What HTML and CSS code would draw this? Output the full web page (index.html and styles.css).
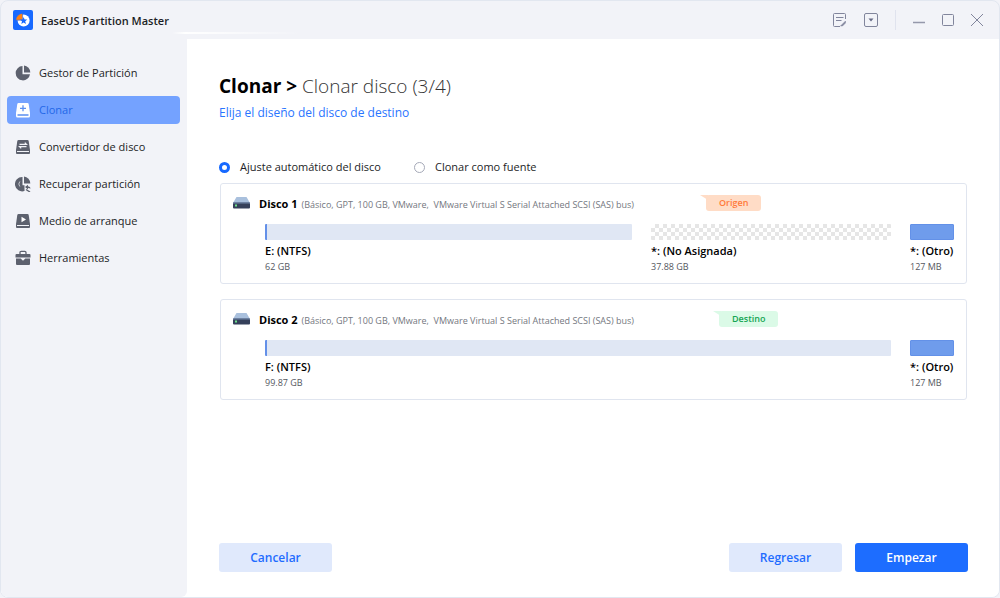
FILE: index.html
```html
<!DOCTYPE html>
<html lang="es">
<head>
    <meta charset="UTF-8">
    <meta name="viewport" content="width=device-width, initial-scale=1.0">
    <title>EaseUS Partition Master</title>
    <link rel="stylesheet" href="styles.css">
</head>
<body>
    <div class="window">
        <header class="titlebar">
            <svg class="logo" viewBox="0 0 20 20" aria-hidden="true">
                <rect width="20" height="20" rx="2" fill="#1769ff"/>
                <circle cx="10.6" cy="10.6" r="6" fill="#fff"/>
                <path d="M9.6 10.2V3.4A6.8 6.8 0 0 0 2.8 10.2z" fill="#ff8010" stroke="#1769ff" stroke-width=".6"/>
                <path d="M10.6 7l1 2.500 2.700.1-2.100 1.700.8 2.700-2.400-1.500L8.300 14l.7-2.700-2-1.700 2.700-.1z" fill="#1769ff"/>
            </svg>
            <span class="app-name">EaseUS Partition Master</span>
            <div class="window-tools">
                <button class="tool" aria-label="Notas">
                    <svg width="14" height="14" viewBox="0 0 14 14" fill="none" stroke="#81859c">
                        <path d="M12.500 6V1.500a1 1 0 0 0-1-1h-10a1 1 0 0 0-1 1v11a1 1 0 0 0 1 1H7M3 4.500h7.500M3 7.500h5.500"/>
                        <path d="M7.500 13l5-5v2l-3 3z" fill="#81859c" stroke-width=".5"/>
                    </svg>
                </button>
                <button class="tool" aria-label="Menú">
                    <svg width="14" height="14" viewBox="0 0 14 14">
                        <rect x=".5" y=".5" width="13" height="13" rx="1.500" fill="none" stroke="#81859c"/>
                        <path d="M4.500 5.500h5L7 8.500z" fill="#666b85"/>
                    </svg>
                </button>
                <span class="divider"></span>
                <button class="tool" aria-label="Minimizar">
                    <svg width="12" height="14" viewBox="0 0 12 14"><path d="M0 9.500h12" stroke="#9598ab" stroke-width="1.300"/></svg>
                </button>
                <button class="tool" aria-label="Maximizar">
                    <svg width="12" height="14" viewBox="0 0 12 14"><rect x=".5" y="1.500" width="11" height="11" rx="1" fill="none" stroke="#81859c"/></svg>
                </button>
                <button class="tool" aria-label="Cerrar">
                    <svg width="12" height="14" viewBox="0 0 12 14"><path d="M0 1l12 12M12 1L0 13" stroke="#81859c"/></svg>
                </button>
            </div>
        </header>

        <div class="content">
            <nav class="sidebar">
                <a href="#" class="nav-item">
                    <svg viewBox="0 0 16 16" fill="#5d616e">
                        <path d="M7.500 1A7.200 7.200 0 1 0 15 9.200H7.500z"/>
                        <path d="M9 .6V7.500h6.300A7 7 0 0 0 9 .6z"/>
                    </svg>
                    Gestor de Partición
                </a>
                <a href="#" class="nav-item active">
                    <svg viewBox="0 0 16 16">
                        <path d="M3.500 1h9q1 0 1.200 1L15 11v3q0 1.500-1.500 1.500h-11Q1 15.500 1 14v-3L2.300 2q.2-1 1.200-1z" fill="#fff"/>
                        <path d="M8 3.300v6M5 6.300h6M2.500 13h11" stroke="#5b8ff0" stroke-width="1.300"/>
                    </svg>
                    Clonar
                </a>
                <a href="#" class="nav-item">
                    <svg viewBox="0 0 16 16">
                        <path d="M3.500 1h9q1 0 1.200 1L15 11v3q0 1-1 1H2q-1 0-1-1v-3L2.300 2q.2-1 1.200-1z" fill="#5d616e"/>
                        <path d="M2 12.500h12M4.500 5.300h7L9.800 3.600M11.500 7.700h-7l1.700 1.700" fill="none" stroke="#f2f3f8" stroke-width="1.200"/>
                    </svg>
                    Convertidor de disco
                </a>
                <a href="#" class="nav-item">
                    <svg viewBox="0 0 16 16" fill="#5d616e">
                        <path d="M7.500 1A7.200 7.200 0 1 0 9.500 15V9.200h-2z"/>
                        <path d="M9 .6V7.500h6.300A7 7 0 0 0 9 .6z"/>
                        <path d="M10 11l3-2.300v1.500q2.600.2 2.600 2.300l-2.600-.5v1.500z"/>
                        <path d="M11 13.500l4 2.500" stroke="#5d616e" stroke-width="1.400"/>
                        <path d="M4.800 5.500a4 4 0 0 0 0 5" fill="none" stroke="#f2f3f8" stroke-width=".7"/>
                    </svg>
                    Recuperar partición
                </a>
                <a href="#" class="nav-item">
                    <svg viewBox="0 0 16 16">
                        <path d="M3.500 1h9q1 0 1.200 1L15 11v3q0 1-1 1H2q-1 0-1-1v-3L2.300 2q.2-1 1.200-1z" fill="#5d616e"/>
                        <path d="M6.500 3.800v5.400L11 6.500z" fill="#fff"/>
                        <path d="M2 12.500h12" stroke="#f2f3f8" stroke-width="1.200"/>
                    </svg>
                    Medio de arranque
                </a>
                <a href="#" class="nav-item">
                    <svg viewBox="0 0 16 16">
                        <path d="M5 4V2.500q0-1.200 1.200-1.200h3.600Q11 1.300 11 2.500V4" fill="none" stroke="#5d616e" stroke-width="1.300"/>
                        <path d="M1.500 4h13q1 0 1 1v2.500H.5V5q0-1 1-1zM1 8.500h4.700L8 10.800l2.300-2.300H15V14q0 1-1 1H2q-1 0-1-1z" fill="#5d616e"/>
                    </svg>
                    Herramientas
                </a>
            </nav>

            <main class="main">
                <h1>Clonar &gt; <span>Clonar disco (3/4)</span></h1>
                <p class="subtitle">Elija el diseño del disco de destino</p>

                <div class="options">
                    <label><input type="radio" name="layout" checked>Ajuste automático del disco</label>
                    <label><input type="radio" name="layout">Clonar como fuente</label>
                </div>

                <section class="disk">
                    <div class="disk-header">
                        <svg class="disk-icon" viewBox="0 0 17 12" aria-hidden="true">
                            <path d="M3.500 0h10L17 6H0z" fill="#a9c0dd"/>
                            <rect y="5.500" width="17" height="6" rx="1" fill="#35405a"/>
                            <path d="M0 6h17" stroke="#6e85a8"/>
                            <rect x="2" y="7.500" width="2" height="2" fill="#6de08a"/>
                        </svg>
                        <div class="disk-title source-title">
                            <h2>Disco 1</h2>
                            <span class="disk-info">(Básico, GPT, 100 GB, VMware,&nbsp; VMware Virtual S Serial Attached SCSI (SAS) bus)</span>
                        </div>
                        <span class="tag tag-source">Origen</span>
                    </div>
                    <div class="partitions">
                        <div class="partition" style="flex-grow: 367">
                            <div class="bar used"></div>
                            <strong>E: (NTFS)</strong>
                            <span>62 GB</span>
                        </div>
                        <div class="partition" style="flex-grow: 240">
                            <div class="bar free"></div>
                            <strong>*: (No Asignada)</strong>
                            <span>37.88 GB</span>
                        </div>
                        <div class="partition small">
                            <div class="bar other"></div>
                            <strong>*: (Otro)</strong>
                            <span>127 MB</span>
                        </div>
                    </div>
                </section>

                <section class="disk">
                    <div class="disk-header">
                        <svg class="disk-icon" viewBox="0 0 17 12" aria-hidden="true">
                            <path d="M3.500 0h10L17 6H0z" fill="#a9c0dd"/>
                            <rect y="5.500" width="17" height="6" rx="1" fill="#35405a"/>
                            <path d="M0 6h17" stroke="#6e85a8"/>
                            <rect x="2" y="7.500" width="2" height="2" fill="#6de08a"/>
                        </svg>
                        <div class="disk-title target-title">
                            <h2>Disco 2</h2>
                            <span class="disk-info">(Básico, GPT, 100 GB, VMware,&nbsp; VMware Virtual S Serial Attached SCSI (SAS) bus)</span>
                        </div>
                        <span class="tag tag-target">Destino</span>
                    </div>
                    <div class="partitions">
                        <div class="partition" style="flex-grow: 626">
                            <div class="bar used"></div>
                            <strong>F: (NTFS)</strong>
                            <span>99.87 GB</span>
                        </div>
                        <div class="partition small">
                            <div class="bar other"></div>
                            <strong>*: (Otro)</strong>
                            <span>127 MB</span>
                        </div>
                    </div>
                </section>

                <div class="actions">
                    <button class="btn cancel">Cancelar</button>
                    <button class="btn">Regresar</button>
                    <button class="btn primary">Empezar</button>
                </div>
            </main>
        </div>
    </div>
</body>
</html>
```
FILE: styles.css
```css
* {
    box-sizing: border-box;
}

body {
    margin: 0;
    font-family: "Open Sans", "Noto Sans", sans-serif;
    font-size: 11px;
    color: #1c1e26;
    background-color: #f2f3f8;
}

button {
    font-family: inherit;
    border: none;
    cursor: pointer;
}

.window {
    display: flex;
    flex-direction: column;
    min-height: 100vh;
    border: 1px solid #e2e7f0;
    border-radius: 8px;
    background-color: #f2f3f8;
    overflow: hidden;
}

.titlebar {
    position: relative;
    display: flex;
    align-items: center;
    height: 38px;
    padding: 0 16px 0 12px;
}

/* soft highlight under the title */
.titlebar::after {
    content: "";
    position: absolute;
    left: 171px;
    bottom: 5px;
    width: 130px;
    height: 2px;
    background: linear-gradient(to right, transparent, #fff 10%, transparent);
}

.logo {
    width: 20px;
    height: 20px;
}

.app-name {
    margin-left: 8px;
    font-weight: 600;
}

.window-tools {
    display: flex;
    align-items: center;
    gap: 17px;
    margin-left: auto;
}

.tool {
    display: flex;
    padding: 0;
    background: none;
}

.divider {
    width: 1px;
    height: 20px;
    background-color: #e0e3ee;
}

.content {
    display: flex;
    flex: 1;
    background-color: #fff;
}

.sidebar {
    display: flex;
    flex-direction: column;
    flex: 0 0 186px;
    gap: 9px;
    padding: 20px 7px 20px 6px;
    background-color: #f2f3f8;
    border-bottom-right-radius: 6px;
}

.nav-item {
    display: flex;
    align-items: center;
    gap: 8px;
    height: 28px;
    padding: 0 8px 1px;
    border-radius: 4px;
    color: #1c1e26;
    text-decoration: none;
}

.nav-item svg {
    width: 16px;
    height: 16px;
}

.nav-item.active {
    background-color: #74a2ff;
    color: #2368e8;
}

.main {
    display: flex;
    flex-direction: column;
    flex: 1;
    min-width: 0;
    padding: 33px 31px 25px 32px;
}

h1 {
    margin: 0;
    font-size: 19px;
    line-height: 28px;
    color: #000;
}

h1 span {
    font-weight: 300;
    color: #333;
}

.subtitle {
    margin: 3px 0 34px;
    font-size: 12px;
    line-height: 20px;
    color: #2a75ff;
}

.options {
    display: flex;
    gap: 33px;
    margin-bottom: 6px;
}

.options label {
    display: flex;
    align-items: center;
    gap: 10px;
    line-height: 20px;
}

.options input {
    appearance: none;
    width: 11px;
    height: 11px;
    margin: 0;
    border: 1px solid #a5a9b8;
    border-radius: 50%;
}

.options input:checked {
    border: 3px solid #1769ff;
}

.disk {
    margin: 0 1px 15px;
    padding: 10px 12px 8px;
    border: 1px solid #e0e5ef;
    border-radius: 3px;
}

.disk-header {
    display: flex;
    align-items: center;
    height: 18px;
    margin-bottom: 12px;
}

.disk-icon {
    width: 17px;
    height: 12px;
    margin-right: 9px;
}

.disk-title {
    display: flex;
    align-items: baseline;
    gap: 4px;
    white-space: nowrap;
}

.source-title {
    flex: 0 0 64%;
    max-width: 447px;
}

.target-title {
    flex: 0 0 64%;
    max-width: 460px;
}

h2 {
    margin: 0;
    font-size: 11px;
    color: #000;
}

.disk-info {
    font-size: 9px;
    color: #747780;
}

.tag {
    position: relative;
    padding: 0 13px;
    border-radius: 3px;
    font-size: 9px;
    font-weight: 600;
    line-height: 16px;
}

.tag::before {
    content: "";
    position: absolute;
    top: 0;
    left: -6px;
    border-top: 5px solid;
    border-left: 8px solid transparent;
}

.tag-source {
    background-color: #ffdcc6;
    color: #ff7a3a;
}

.tag-source::before {
    border-top-color: #ffdcc6;
}

.tag-target {
    background-color: #dbfae7;
    color: #15a554;
}

.tag-target::before {
    border-top-color: #dbfae7;
}

.partitions {
    display: flex;
    gap: 19px;
    padding-left: 32px;
}

.partition {
    display: flex;
    flex-direction: column;
    flex: 1 1 0;
    min-width: 0;
    line-height: 16px;
    white-space: nowrap;
}

.partition.small {
    flex: 0 0 44px;
}

.partition strong {
    font-size: 11px;
    font-weight: 600;
    color: #000;
}

.partition span {
    font-size: 9px;
    color: #55585f;
}

.bar {
    height: 16px;
    margin-bottom: 3px;
    border-radius: 1px;
}

.bar.used {
    background-color: #e0e7f4;
    border-left: 2px solid #6490e8;
}

.bar.free {
    background: repeating-conic-gradient(#e6e6e6 0 25%, #fff 0 50%) 0 0 / 8px 8px;
}

.bar.other {
    background-color: #6f9cec;
    border: 1px solid #6391e8;
}

.actions {
    display: flex;
    gap: 13px;
    margin-top: auto;
}

.btn {
    width: 113px;
    height: 29px;
    border-radius: 3px;
    background-color: #e0e9fc;
    color: #1f6cff;
    font-size: 12px;
    font-weight: 600;
}

.btn.cancel {
    margin-right: auto;
}

.btn.primary {
    background-color: #1d6dff;
    color: #fff;
}
```
